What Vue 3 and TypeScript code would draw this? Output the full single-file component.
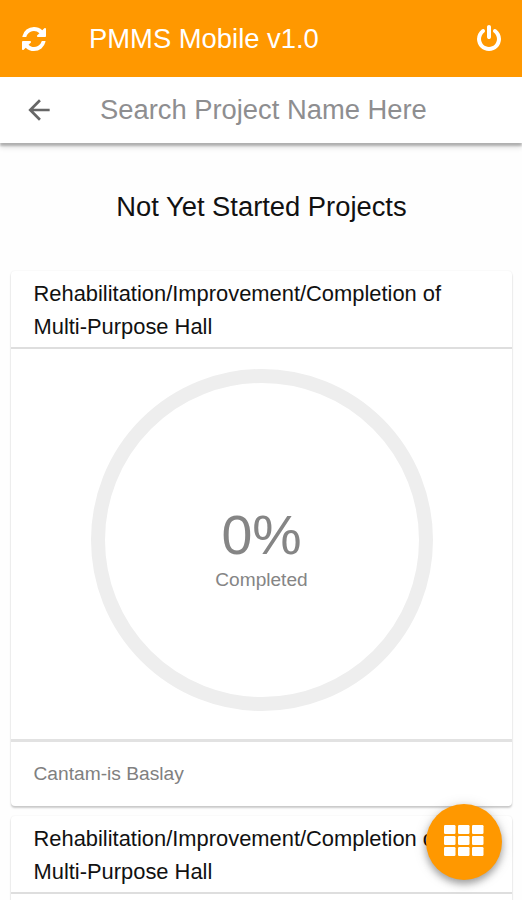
<script setup lang="ts">
interface Project {
  id: number
  name: string
  percent: number
  location: string
}

const heading = 'Not Yet Started Projects'
const projects: Project[] = [
  { id: 1, name: 'Rehabilitation/Improvement/Completion of Multi-Purpose Hall', percent: 0, location: 'Cantam-is Baslay' },
  { id: 2, name: 'Rehabilitation/Improvement/Completion of Multi-Purpose Hall', percent: 0, location: 'Cantam-is Baslay' },
]
const gridCells = Array.from({ length: 9 }, (_, i) => ({ x: (i % 3) * 14, y: Math.floor(i / 3) * 11 }))
</script>

<template>
  <div class="screen">
    <header class="toolbar">
      <button class="icon-btn" aria-label="Refresh">
        <svg class="refresh" viewBox="0 0 1536 1536">
          <path d="M1511 928q0 5-1 7-64 268-268 434.500T764 1536q-146 0-282.500-55T238 1324l-129 129q-19 19-45 19t-45-19-19-45V960q0-26 19-45t45-19h448q26 0 45 19t19 45-19 45l-137 137q71 66 161 102t187 36q134 0 250-65t186-179q11-17 53-117 8-23 30-23h192q13 0 22.500 9.500t9.500 22.500zm25-800v448q0 26-19 45t-45 19h-448q-26 0-45-19t-19-45 19-45l138-138Q969 256 768 256q-134 0-250 65T332 500q-11 17-53 117-8 23-30 23H50q-13 0-22.500-9.500T18 608v-7q65-268 270-434.500T768 0q146 0 284 55.500T1297 212l130-129q19-19 45-19t45 19 19 45z" />
        </svg>
      </button>
      <h1 class="app-name">PMMS Mobile v1.0</h1>
      <button class="icon-btn" aria-label="Log out">
        <svg class="power" viewBox="0 0 1536 1664">
          <path d="M1536 896q0 156-61 298t-164 245-245 164-298 61-298-61-245-164T61 1194 0 896q0-182 80.500-343T307 283q43-32 95.500-25t83.500 50q32 42 24.500 94.500T461 487q-98 74-151.500 181T256 896q0 104 40.500 198.500T406 1258t163.500 109.500T768 1408t198.500-40.500T1130 1258t109.500-163.500T1280 896q0-121-53.500-228T1075 487q-42-32-49.500-84.500T1050 308q31-43 84-50t95 25q146 109 226.500 270t80.500 343zM896 128v640q0 52-38 90t-90 38-90-38-38-90V128q0-52 38-90t90-38 90 38 38 90z" />
        </svg>
      </button>
    </header>

    <div class="search">
      <svg class="back" viewBox="0 0 24 24"><path d="M20 11H7.830l5.590-5.590L12 4l-8 8 8 8 1.410-1.410L7.830 13H20v-2z" /></svg>
      <input class="search-input" type="text" placeholder="Search Project Name Here" />
    </div>

    <main class="content">
      <h2 class="heading">{{ heading }}</h2>
      <article v-for="p in projects" :key="p.id" class="card">
        <h3 class="card-title">{{ p.name }}</h3>
        <div class="card-body">
          <div class="ring">
            <span class="percent">{{ p.percent }}%</span>
            <span class="label">Completed</span>
          </div>
        </div>
        <footer class="card-footer">{{ p.location }}</footer>
      </article>
    </main>

    <button class="fab" aria-label="Menu">
      <svg class="grid" viewBox="0 0 40 32">
        <rect v-for="(c, i) in gridCells" :key="i" :x="c.x" :y="c.y" width="11.500" height="9" rx="1.200" />
      </svg>
    </button>
  </div>
</template>

<style>
body {
  margin: 0;
  overflow: hidden;
}
</style>

<style scoped>
.screen {
  position: relative;
  display: flex;
  flex-direction: column;
  height: 900px;
  overflow: hidden;
  background: #fefefe;
  font-family: "Liberation Sans", Arial, sans-serif;
  color: #111;
}
button {
  border: 0;
  padding: 0;
  background: none;
}
h1, h2, h3 {
  margin: 0;
  font-weight: 400;
}
.toolbar {
  flex: none;
  display: flex;
  align-items: center;
  height: 76.500px;
  box-sizing: border-box;
  padding: 1px 21px 0 22px;
  background: #ff9800;
  color: #fff;
}
.icon-btn {
  display: flex;
}
.icon-btn svg {
  fill: #fff;
}
.refresh {
  width: 24px;
  height: 24px;
}
.power {
  width: 24px;
  height: 26px;
  margin-bottom: 2px;
}
.app-name {
  flex: 1;
  padding-left: 43px;
  font-size: 27.400px;
  line-height: 32px;
}
.search {
  flex: none;
  display: flex;
  align-items: center;
  height: 66px;
  padding-left: 23px;
  background: #fff;
  box-shadow: 0 3px 2px rgba(0, 0, 0, 0.230), 0 5px 5px rgba(0, 0, 0, 0.100);
}
.back {
  width: 32px;
  height: 32px;
  fill: #666;
}
.search-input {
  flex: 1;
  min-width: 0;
  margin-left: 45px;
  padding: 0;
  border: 0;
  outline: 0;
  background: none;
  font: 27.350px "Liberation Sans", Arial, sans-serif;
}
.search-input::placeholder {
  color: #8e8e90;
}
.content {
  display: flex;
  flex-direction: column;
  gap: 10px;
  padding: 0 10px 0 11px;
}
.heading {
  padding: 48px 0 38px;
  text-align: center;
  font-size: 27.350px;
  line-height: 32px;
}
.card {
  flex: none;
  border-radius: 4px;
  background: #fff;
  box-shadow: 0 2px 2px rgba(0, 0, 0, 0.200), 0 0 2px rgba(0, 0, 0, 0.070);
}
.card-title {
  height: 78px;
  box-sizing: border-box;
  padding: 6.500px 22.500px 0;
  border-bottom: 2px solid #dedede;
  font-size: 21.900px;
  line-height: 33px;
}
.card-body {
  display: flex;
  justify-content: center;
  height: 393px;
  box-sizing: border-box;
  padding-top: 20px;
  border-bottom: 3px solid #e2e2e2;
}
.ring {
  display: flex;
  flex-direction: column;
  align-items: center;
  width: 342px;
  height: 342px;
  box-sizing: border-box;
  padding-top: 120px;
  border: 14px solid #eee;
  border-radius: 50%;
  color: #858585;
}
.percent {
  font-size: 55.500px;
  line-height: 64px;
}
.label {
  padding-top: 1px;
  font-size: 19.100px;
  line-height: 24px;
}
.card-footer {
  height: 64px;
  padding: 0 22.500px;
  color: #808080;
  font-size: 19.200px;
  line-height: 64px;
}
.fab {
  position: absolute;
  right: 20px;
  bottom: 20px;
  display: flex;
  align-items: center;
  justify-content: center;
  width: 76px;
  height: 76px;
  border-radius: 50%;
  background: #ff9800;
  box-shadow: 0 4px 7px rgba(0, 0, 0, 0.300), 0 2px 14px rgba(0, 0, 0, 0.150);
}
.grid {
  width: 40px;
  height: 32px;
  margin-bottom: 3px;
  fill: #fff;
}
</style>
